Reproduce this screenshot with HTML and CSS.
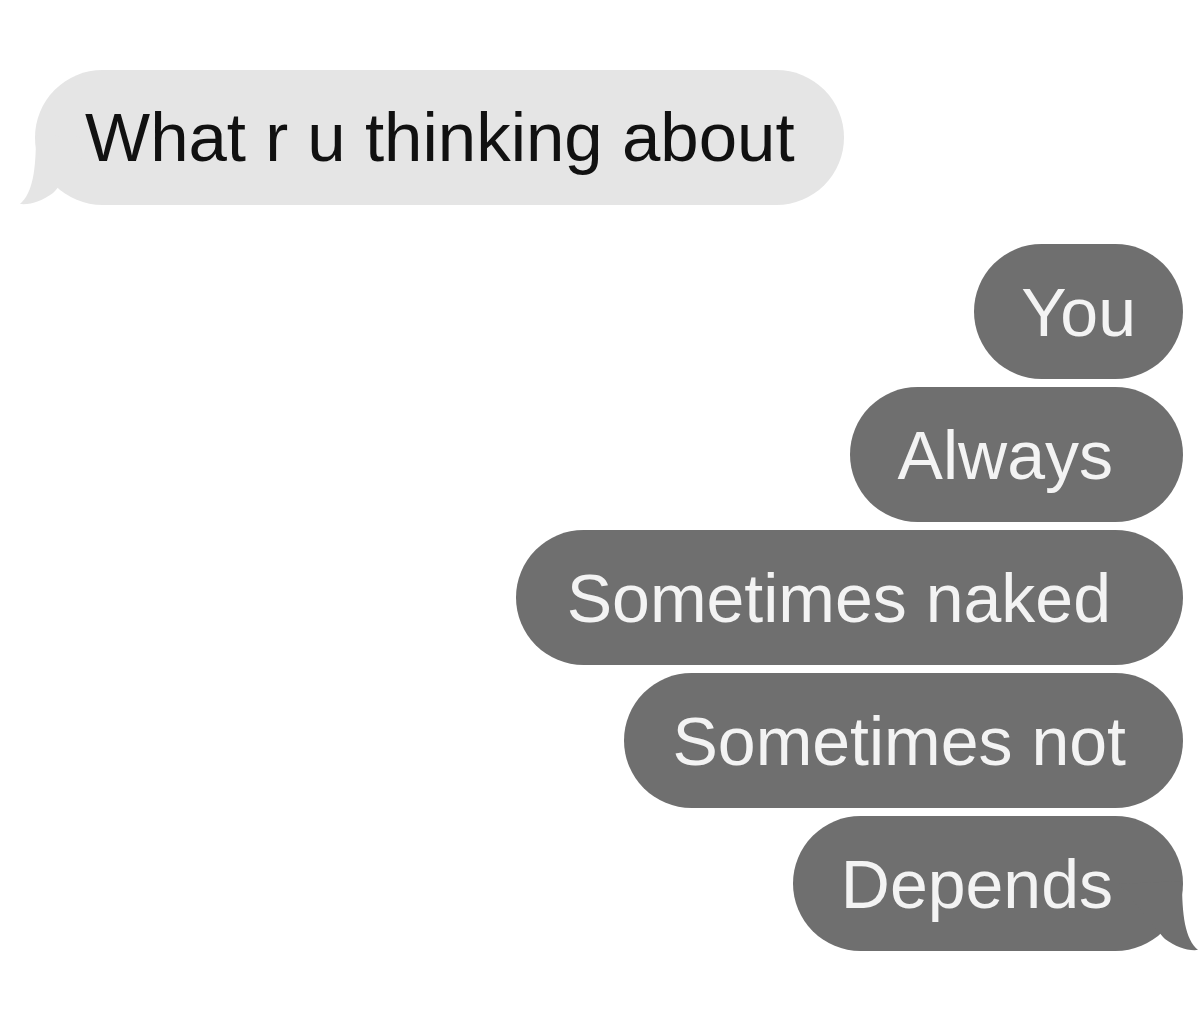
FILE: index.html
```html
<!DOCTYPE html>
<html lang="en">
<head>
<meta charset="utf-8">
<title>Messages</title>
<link rel="stylesheet" href="styles.css">
</head>
<body>
<main class="chat">
  <div class="bubble in">
    <span>What r u thinking about</span>
    <svg class="tail tail-left" viewBox="0 0 80 80" aria-hidden="true"><path d="M63 10 C63 44 66 68 79 79 C68 80 57 76 46 68 L44 66 L0 13 Z"/></svg>
  </div>
  <div class="outgoing">
    <div class="bubble out pr-s">You</div>
    <div class="bubble out">Always</div>
    <div class="bubble out pr-l">Sometimes naked</div>
    <div class="bubble out pr-m">Sometimes not</div>
    <div class="bubble out last">
      <span>Depends</span>
      <svg class="tail tail-right" viewBox="0 0 80 80" aria-hidden="true"><path d="M63 10 C63 44 66 68 79 79 C68 80 57 76 46 68 L44 66 L0 13 Z"/></svg>
    </div>
  </div>
</main>
</body>
</html>
```

FILE: styles.css
```css
html, body {
  margin: 0;
  padding: 0;
  background: #ffffff;
}

body {
  font-family: "Liberation Sans", Arial, sans-serif;
  width: 1200px;
  height: 1033px;
  overflow: hidden;
}

.chat {
  display: flex;
  flex-direction: column;
  padding: 70px 17px 0 35px;
}

.bubble {
  position: relative;
  display: flex;
  align-items: center;
  height: 135px;
  border-radius: 68px;
  white-space: nowrap;
  box-sizing: border-box;
}

.bubble span {
  position: relative;
  z-index: 1;
}

.in {
  align-self: flex-start;
  background: #e5e5e5;
  color: #111111;
  font-size: 69px;
  padding: 0 49px 0 50px;
}

.outgoing {
  display: flex;
  flex-direction: column;
  align-items: flex-end;
  gap: 8px;
  margin-top: 39px;
}

.out {
  background: #6f6f6f;
  color: #f3f3f3;
  font-size: 68px;
  padding: 0 70px 0 48px;
}

.out.pr-s { padding-right: 47px; padding-left: 47px; }
.out.pr-m { padding-right: 57px; }
.out.pr-l { padding-right: 72px; padding-left: 51px; }

.tail {
  position: absolute;
  bottom: 0;
  width: 80px;
  height: 80px;
  z-index: 0;
}

.tail-right {
  right: -16px;
  fill: #6f6f6f;
}

.tail-left {
  left: -16px;
  fill: #e5e5e5;
  transform: scaleX(-1);
}
```
